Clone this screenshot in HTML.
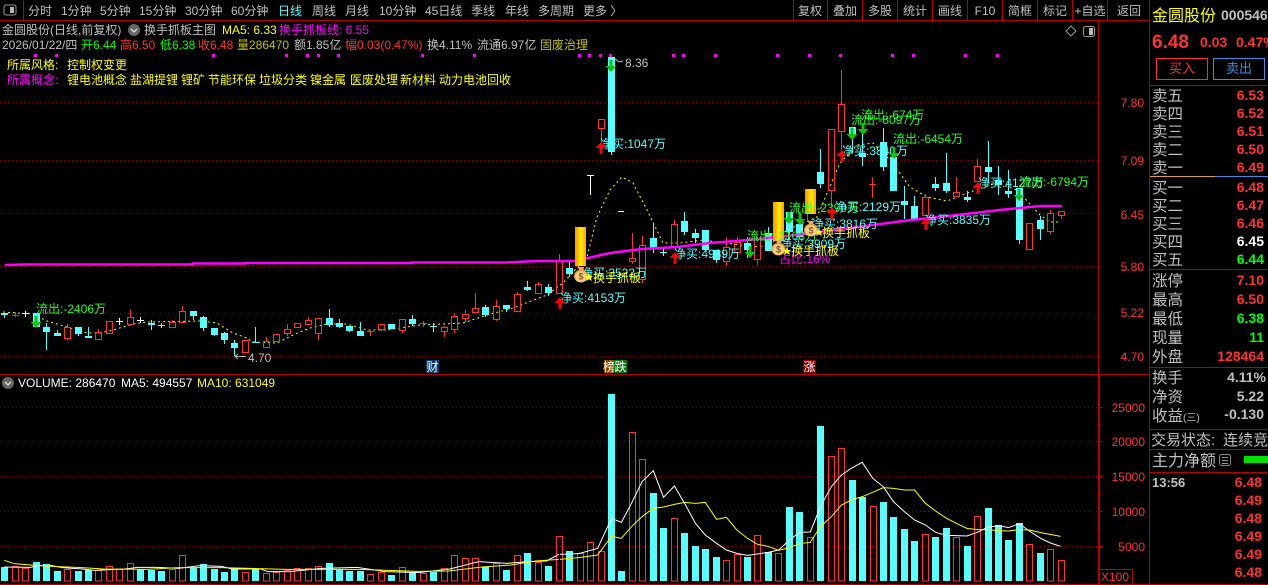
<!DOCTYPE html>
<html><head><meta charset="utf-8"><title>金圆股份</title>
<style>
html,body{margin:0;padding:0;background:#000;width:1268px;height:585px;overflow:hidden}
svg{display:block}
text{font-family:"Liberation Sans","WenQuanYi Zen Hei","Noto Sans CJK SC",sans-serif;font-size:12px;fill:#c0c0c0;white-space:pre}
.y{fill:#ff0}.m{fill:#f0f}.r{fill:#ff3232}.g{fill:#2f2}.c{fill:#5ff}.o{fill:#c0c000}.gn{fill:#0f0}
.l{font-size:15.5px}
.p{font-size:14px;font-weight:bold;text-anchor:end;fill:#ff3232}
.a{fill:#ff3232;text-anchor:end}
.tb{text-anchor:middle}
</style></head><body>
<svg width="1268" height="585" viewBox="0 0 1268 585" xmlns="http://www.w3.org/2000/svg">
<defs>
<linearGradient id="gold" x1="0" x2="1" y1="0" y2="0"><stop offset="0" stop-color="#ff9000"/><stop offset=".55" stop-color="#ffee00"/><stop offset="1" stop-color="#ffa000"/></linearGradient>
<radialGradient id="bag" cx=".5" cy=".55" r=".55"><stop offset="0" stop-color="#ffe8b0"/><stop offset=".7" stop-color="#f5c878"/><stop offset="1" stop-color="#c87810"/></radialGradient>
<path id="dn" d="M-1.5 0h3v6h4l-5.500 6-5.500-6h4z" fill="#12c012"/>
<path id="up" d="M0 0l5.500 6h-4v6h-3v-6h-4z" fill="#f00"/>
</defs>
<rect width="1268" height="585" fill="#000"/>

<!-- grid -->
<g stroke="#900000" stroke-width="1" stroke-dasharray="1 3">
<path d="M0 102.500H1098M0 160.500H1098M0 213.500H1098M0 266.500H1098M0 313.500H1098M0 356.500H1098M0 407.500H1098M0 441.500H1098M0 476.500H1098M0 511.500H1098M0 546.500H1098"/>
</g>

<!-- frame -->
<g stroke="#b80000" stroke-width="1" fill="none" shape-rendering="crispEdges">
<path d="M0 20.500H1149M0 374.500H1149M0 584.500H1268M1098.500 20V585M1149.500 0V585M23.500 0V20M793.500 0V20M827.500 0V20M862.500 0V20M897.500 0V20M932.500 0V20M967.500 0V20M1002.500 0V20M1037.500 0V20M1072.500 0V20M1107.500 0V20"/>
<path d="M1150 85.500H1268M1150 269.500H1268M1150 367.500H1268M1150 429.500H1268M1150 449.500H1268M1150 472.500H1268M1099.500 375V585"/>
<path d="M1099.500 569.500H1132.500V584M1099 407.500h4M1099 441.500h4M1099 476.500h4M1099 511.500h4M1099 546.500h4M1099 424.500h2M1099 459.500h2M1099 494.500h2M1099 529.500h2"/>
</g>

<!-- tabs -->
<rect x="4" y="5" width="12" height="10" rx="2" fill="none" stroke="#999"/><rect x="10" y="7" width="4" height="6" fill="#bbb"/>
<g>
<text x="28" y="15">分时</text><text x="61" y="15">1分钟</text><text x="100" y="15">5分钟</text><text x="139" y="15">15分钟</text><text x="185" y="15">30分钟</text><text x="231" y="15">60分钟</text><text x="278" y="15" class="c">日线</text><text x="312" y="15">周线</text><text x="345" y="15">月线</text><text x="379" y="15">10分钟</text><text x="425" y="15">45日线</text><text x="471" y="15">季线</text><text x="505" y="15">年线</text><text x="538" y="15">多周期</text><text x="583" y="15">更多 〉</text>
<text class="tb" x="810" y="15">复权</text><text class="tb" x="845" y="15">叠加</text><text class="tb" x="880" y="15">多股</text><text class="tb" x="915" y="15">统计</text><text class="tb" x="950" y="15">画线</text><text class="tb" x="985" y="15">F10</text><text class="tb" x="1020" y="15">简框</text><text class="tb" x="1055" y="15">标记</text><text class="tb" x="1090" y="15">+自选</text><text class="tb" x="1129" y="15">返回</text>
</g>

<!-- header rows -->
<text x="2" y="34">金圆股份(日线,前复权)</text>
<circle cx="134" cy="30" r="6" fill="#666"/><path d="M131 29l3 3 3-3" stroke="#ddd" fill="none" stroke-width="1.300"/>
<text x="144" y="34">换手抓板主图</text><text x="222" y="34" class="y">MA5: 6.33</text><text x="279" y="34" class="m">换手抓板线: 6.55</text>
<text x="2" y="49">2026/01/22/四</text><text x="81" y="49" class="gn">开6.44</text><text x="120" y="49" class="r">高6.50</text><text x="160" y="49" class="gn">低6.38</text><text x="198" y="49" class="r">收6.48</text><text x="237" y="49" class="o">量286470</text><text x="294" y="49">额1.85亿</text><text x="345" y="49" class="r">幅0.03(0.47%)</text><text x="427" y="49">换4.11%</text><text x="477" y="49">流通6.97亿</text><text x="540" y="49" class="o">固废治理</text>
<text x="7" y="69" class="y">所属风格:</text><text x="67" y="69" class="y">控制权变更</text>
<text x="7" y="84" class="m">所属概念:</text>
<text x="67" y="84" class="y">锂电池概念</text><text x="130" y="84" class="y">盐湖提锂</text><text x="181" y="84" class="y">锂矿</text><text x="208" y="84" class="y">节能环保</text><text x="259" y="84" class="y">垃圾分类</text><text x="310" y="84" class="y">镍金属</text><text x="350" y="84" class="y">医废处理</text><text x="400" y="84" class="y">新材料</text><text x="439" y="84" class="y">动力电池回收</text>

<!-- top-right chart icons -->
<path d="M1071 26l5 5-5 5-5-5z" fill="none" stroke="#999"/>
<rect x="1083.500" y="26.500" width="11" height="10" rx="2" fill="none" stroke="#999"/><rect x="1089" y="28" width="4" height="7" fill="#bbb"/>

<!-- magenta dots -->
<path fill="#f0f" d="M34 54h3v3h-3zM55 54h3v3h-3zM212 54h3v3h-3zM285 54h3v3h-3zM306 54h3v3h-3zM317 54h3v3h-3zM337 54h3v3h-3zM421 54h3v3h-3zM473 54h3v3h-3zM578 54h3v3h-3zM588 54h3v3h-3zM599 54h3v3h-3zM609 54h3v3h-3zM672 54h3v3h-3zM682 54h3v3h-3zM714 54h3v3h-3zM776 54h3v3h-3zM808 54h3v3h-3zM839 54h3v3h-3zM891 54h3v3h-3zM912 54h3v3h-3zM964 54h3v3h-3zM996 54h3v3h-3z"/>

<!-- MA dashed yellow -->
<path fill="none" stroke="#ff0" stroke-width="1" stroke-dasharray="2 3" d="M3 312L33 314L47 321L67 327L87 333L100 333L113 330L133 324L147 322L200 321L217 323L233 333L247 338L253 342L277 343L293 335L310 328L327 324L347 324L367 330L387 330L420 325L463 323L487 315L513 308L547 295L563 283L587 257L597 217L610 190L622 177L633 183L647 210L663 243L680 243L703 240L748 246L767 247L787 230L817 217L840 163L857 145L873 143L890 160L910 187L927 197L947 201L970 192L997 183L1017 190L1040 215L1050 222L1060 222"/>

<!-- white doji -->
<path stroke="#fff" stroke-width="1" fill="none" shape-rendering="crispEdges" d="M25.500 311V317M22 313.500h7M119.500 318V325M116 321.500h7M140.500 317V323M137 320.500h7M590.500 175V195M587 175.500h7M618 211.500h6"/>

<!-- cyan wicks -->
<path stroke="#5ff" stroke-width="1" fill="none" shape-rendering="crispEdges" d="M4.500 313V318M46.500 323V350M57.500 330V336M78.500 327V336M88.500 327V338M151.500 320V330M161.500 323V328M193.500 311V320M203.500 316V331M214.500 328V336M224.500 332V344M234.500 340V356M255.500 327V343M329.500 309V327M339.500 319V328M349.500 326V332M360.500 322V336M412.500 315V326M433.500 323V332M485.500 305V317M506.500 305V312M527.500 281V291M548.500 284V296M569.500 261V277M611.500 57V155M653.500 223V253M663.500 247V256M684.500 212V235M695.500 229V243M716.500 250V263M747.500 237V258M768.500 227V251M789.500 212V240M820.500 149V188M852.500 127V153M862.500 133V166M883.500 128V171M904.500 186V219M914.500 196V219M935.500 177V191M946.500 153V193M967.500 191V202M988.500 141V183M998.500 166V195M1008.500 170V198M1019.500 188V244M1040.500 216V240"/>
<!-- cyan bodies -->
<path fill="#5ff" shape-rendering="crispEdges" d="M1 313h7V315h-7zM33 313h7V327h-7zM43 327h7V332h-7zM54 333h7V336h-7zM75 327h7V334h-7zM85 336h7V338h-7zM148 323h7V325h-7zM158 325h7V326h-7zM190 311h7V316h-7zM200 317h7V328h-7zM211 328h7V335h-7zM221 333h7V340h-7zM231 343h7V348h-7zM252 342h7V343h-7zM326 318h7V325h-7zM336 323h7V327h-7zM346 326h7V331h-7zM357 331h7V336h-7zM388 324h7V329h-7zM409 319h7V324h-7zM430 326h7V327h-7zM482 307h7V315h-7zM503 305h7V309h-7zM524 287h7V290h-7zM545 287h7V293h-7zM566 268h7V274h-7zM608 57h7V152h-7zM650 238h7V248h-7zM660 252h7V253h-7zM681 221h7V232h-7zM692 233h7V238h-7zM702 230h7V250h-7zM713 250h7V260h-7zM744 243h7V250h-7zM765 233h7V251h-7zM786 212h7V232h-7zM796 224h7V237h-7zM817 172h7V184h-7zM849 127h7V135h-7zM859 153h7V157h-7zM880 142h7V167h-7zM890 157h7V191h-7zM901 201h7V205h-7zM911 206h7V219h-7zM932 184h7V188h-7zM943 183h7V191h-7zM964 197h7V200h-7zM985 167h7V172h-7zM995 180h7V185h-7zM1005 191h7V194h-7zM1016 188h7V240h-7zM1037 220h7V229h-7z"/>
<!-- red candles -->
<path stroke="#ff3232" stroke-width="1" fill="none" shape-rendering="crispEdges" d="M12 315.500h7M15.500 312V317M64.500 327.500h6V338.500h-6zM67.500 324V327M67.500 339V340M95.500 332.500h6V339.500h-6zM98.500 329V332M106.500 321.500h6V333.500h-6zM127.500 317.500h6V324.500h-6zM130.500 310V317M169.500 322.500h6V327.500h-6zM172.500 320V322M179.500 311.500h6V322.500h-6zM182.500 306V311M242.500 340.500h6V352.500h-6zM263.500 341.500h6V347.500h-6zM266.500 337V341M273.500 334.500h6V341.500h-6zM284.500 329.500h6V333.500h-6zM287.500 324V329M287.500 334V336M294.500 323.500h6V327.500h-6zM305.500 320.500h6V324.500h-6zM308.500 317V320M315.500 318.500h6V333.500h-6zM318.500 334V340M367 331.500h7M370.500 331V336M378.500 324.500h6V329.500h-6zM381.500 330V331M399.500 319.500h6V330.500h-6zM402.500 331V333M420 323.500h7M423.500 321V327M441.500 327.500h6V331.500h-6zM444.500 326V327M444.500 332V337M451.500 316.500h6V329.500h-6zM454.500 313V316M454.500 330V333M462.500 314.500h6V318.500h-6zM465.500 310V314M465.500 319V322M472.500 308.500h6V312.500h-6zM475.500 293V308M493.500 306.500h6V319.500h-6zM496.500 300V306M496.500 320V321M514.500 294.500h6V311.500h-6zM517.500 292V294M535.500 284.500h6V293.500h-6zM538.500 282V284M556.500 261.500h6V293.500h-6zM559.500 254V261M598.500 119.500h6V128.500h-6zM601.500 129V145M629.500 258.500h6V261.500h-6zM632.500 233V258M632.500 262V264M639.500 245.500h6V279.500h-6zM642.500 236V245M642.500 280V283M671.500 224.500h6V247.500h-6zM674.500 220V224M723.500 247.500h6V261.500h-6zM726.500 237V247M726.500 262V266M734.500 242.500h6V252.500h-6zM737.500 237V242M754.500 238.500h6V259.500h-6zM757.500 237V238M757.500 260V265M828.500 129.500h6V190.500h-6zM831.500 191V216M838.500 104.500h6V131.500h-6zM841.500 70V104M841.500 132V150M869 184.500h7M872.500 177V198M922.500 197.500h6V215.500h-6zM925.500 194V197M953.500 192.500h6V196.500h-6zM956.500 177V192M974.500 166.500h6V181.500h-6zM977.500 159V166M1026.500 223.500h6V249.500h-6zM1047.500 213.500h6V231.500h-6zM1050.500 210V213M1050.500 232V234M1058.500 211.500h6V215.500h-6zM1061.500 216V219M807.500 214V222"/>

<!-- magenta MA -->
<path fill="none" stroke="#f0f" stroke-width="2.500" d="M5 265L25 264.500H193V263.500H245V263H412V262.500H506L538 261H575L588 258L610 253L642 249L677 247L710 243L748 240L795 235L850 228L903 221L957 215L1000 210L1040 206L1062 206"/>

<!-- gold bars -->
<rect x="575" y="227" width="11" height="39" fill="url(#gold)"/>
<rect x="773" y="202" width="11" height="39" fill="url(#gold)"/>
<rect x="805" y="189" width="11" height="25" fill="url(#gold)"/>

<!-- annotations -->
<text x="36" y="313" class="g">流出:-2406万</text>
<text x="600" y="148" class="c">净买:1047万</text>
<text x="581" y="277" class="c">净买:3522万</text>
<text x="560" y="302" class="c">净买:4153万</text>
<text x="674" y="258" class="c">净买:4989万</text>
<text x="747" y="240" class="g">流出:-3108万</text>
<text x="780" y="248" class="c">净买:3909万</text>
<text x="812" y="228" class="c">净买:3816万</text>
<text x="789" y="212" class="g">流出:-2390万</text>
<text x="835" y="211" class="c">净买:2129万</text>
<text x="851" y="124" class="g">流出:-8097万</text>
<text x="861" y="119" class="g">流出:-674万</text>
<text x="893" y="143" class="g">流出:-6454万</text>
<text x="842" y="155" class="c">净买:3840万</text>
<text x="925" y="224" class="c">净买:3835万</text>
<text x="978" y="187" class="c">净买:4127万</text>
<text x="1019" y="186" class="g">流出:-6794万</text>
<text x="779" y="263" class="m">占比:16%</text>
<text x="625" y="67">8.36</text>
<path d="M615 59l4 3 4-1" stroke="#bbb" fill="none"/>
<text x="248" y="362">4.70</text>
<path d="M235 356.500h11M238 354l-3 2.500 3 2.500" stroke="#bbb" fill="none"/>

<!-- arrows -->
<use href="#dn" x="36" y="316"/><use href="#dn" x="611" y="60"/><use href="#dn" x="789" y="212"/><use href="#dn" x="800" y="213"/><use href="#dn" x="852" y="128"/><use href="#dn" x="863" y="123"/><use href="#dn" x="894" y="147"/><use href="#dn" x="1019" y="189"/><use href="#dn" x="750" y="246"/>
<use href="#up" x="560" y="297"/><use href="#up" x="601" y="142"/><use href="#up" x="675" y="252"/><use href="#up" x="832" y="207"/><use href="#up" x="842" y="150"/><use href="#up" x="926" y="218"/><use href="#up" x="978" y="182"/>

<!-- bags -->
<g>
<ellipse cx="581" cy="276" rx="7" ry="6.500" fill="url(#bag)"/><path d="M578 267h6l-1 3h-4z" fill="#e8b060"/><text x="578.500" y="279.500" style="font-size:9px;font-weight:bold;fill:#8a4a10">$</text>
<ellipse cx="778.500" cy="249" rx="7" ry="6.500" fill="url(#bag)"/><path d="M776 240h6l-1 3h-4z" fill="#e8b060"/><text x="776" y="252.500" style="font-size:9px;font-weight:bold;fill:#8a4a10">$</text>
<ellipse cx="811" cy="230" rx="7" ry="6.500" fill="url(#bag)"/><path d="M808 221h6l-1 3h-4z" fill="#e8b060"/><text x="808.500" y="233.500" style="font-size:9px;font-weight:bold;fill:#8a4a10">$</text>
</g>
<polygon points="589,273 590.200,276 593,276 591,278 592,281 589,279.300 586,281 587,278 585,276 587.800,276" fill="#ff0"/>
<polygon points="787,247 788.200,250 791,250 789,252 790,255 787,253.300 784,255 785,252 783,250 785.800,250" fill="#ff0"/>
<polygon points="819,228 820.200,231 823,231 821,233 822,236 819,234.300 816,236 817,233 815,231 817.800,231" fill="#ff0"/>
<text x="593" y="282" class="y">换手抓板</text>
<text x="791" y="255" class="y">换手抓板</text>
<text x="822" y="237" class="y">换手抓板</text>

<!-- event markers -->
<rect x="426" y="360" width="13" height="13" fill="#0a3a70"/><text x="426.500" y="371" style="fill:#fff">财</text>
<rect x="604" y="360" width="11" height="13" fill="#8a4a00"/><text x="603" y="371" style="fill:#fff">榜</text>
<rect x="614" y="360" width="13" height="13" fill="#0a7a0a"/><text x="614.500" y="371" style="fill:#fff">跌</text>
<rect x="803" y="360" width="13" height="13" fill="#8a0000"/><text x="803.500" y="371" style="fill:#fff">涨</text>

<!-- axis labels main -->
<text class="a" x="1144" y="107">7.80</text><text class="a" x="1144" y="165">7.09</text><text class="a" x="1144" y="219">6.45</text><text class="a" x="1144" y="271">5.80</text><text class="a" x="1144" y="317">5.22</text><text class="a" x="1144" y="361">4.70</text>
<text class="a" x="1145" y="412">25000</text><text class="a" x="1145" y="446">20000</text><text class="a" x="1145" y="481">15000</text><text class="a" x="1145" y="516">10000</text><text class="a" x="1145" y="551">5000</text>
<text x="1101" y="581" class="r">X100</text>

<!-- volume header -->
<circle cx="8" cy="383" r="6" fill="#666"/><path d="M5 382l3 3 3-3" stroke="#ddd" fill="none" stroke-width="1.300"/>
<text x="18" y="387" style="fill:#fff">VOLUME: 286470</text><text x="121" y="387" style="fill:#fff">MA5: 494557</text><text x="197" y="387" class="y">MA10: 631049</text>

<!-- volume bars cyan -->
<path fill="#5ff" shape-rendering="crispEdges" d="M1 567h7V581h-7zM33 562h7V581h-7zM43 564h7V581h-7zM54 571h7V581h-7zM75 571h7V581h-7zM85 570h7V581h-7zM137 569h7V581h-7zM148 570h7V581h-7zM158 571h7V581h-7zM190 568h7V581h-7zM200 564h7V581h-7zM211 569h7V581h-7zM221 572h7V581h-7zM231 569h7V581h-7zM252 569h7V581h-7zM326 563h7V581h-7zM336 570h7V581h-7zM346 571h7V581h-7zM357 571h7V581h-7zM388 575h7V581h-7zM409 572h7V581h-7zM430 572h7V581h-7zM482 567h7V581h-7zM503 570h7V581h-7zM524 553h7V581h-7zM545 566h7V581h-7zM566 551h7V581h-7zM608 394h7V581h-7zM618 571h7V581h-7zM650 493h7V581h-7zM660 528h7V581h-7zM681 533h7V581h-7zM692 546h7V581h-7zM702 549h7V581h-7zM713 557h7V581h-7zM744 557h7V581h-7zM765 552h7V581h-7zM786 507h7V581h-7zM796 512h7V581h-7zM817 426h7V581h-7zM849 480h7V581h-7zM859 497h7V581h-7zM880 502h7V581h-7zM890 517h7V581h-7zM901 529h7V581h-7zM911 541h7V581h-7zM932 537h7V581h-7zM943 528h7V581h-7zM964 546h7V581h-7zM985 508h7V581h-7zM995 525h7V581h-7zM1005 540h7V581h-7zM1016 523h7V581h-7zM1037 553h7V581h-7z"/>
<!-- volume bars red -->
<path fill="none" stroke="#ff3232" stroke-width="1" shape-rendering="crispEdges" d="M12.500 566.500h6V581h-6zM22.500 568.500h6V581h-6zM64.500 569.500h6V581h-6zM95.500 570.500h6V581h-6zM106.500 566.500h6V581h-6zM116.500 569.500h6V581h-6zM127.500 563.500h6V581h-6zM169.500 569.500h6V581h-6zM179.500 555.500h6V581h-6zM242.500 572.500h6V581h-6zM263.500 573.500h6V581h-6zM273.500 572.500h6V581h-6zM284.500 570.500h6V581h-6zM294.500 568.500h6V581h-6zM305.500 568.500h6V581h-6zM315.500 566.500h6V581h-6zM367.500 574.500h6V581h-6zM378.500 572.500h6V581h-6zM399.500 567.500h6V581h-6zM420.500 573.500h6V581h-6zM441.500 568.500h6V581h-6zM451.500 555.500h6V581h-6zM462.500 558.500h6V581h-6zM472.500 558.500h6V581h-6zM493.500 563.500h6V581h-6zM514.500 555.500h6V581h-6zM535.500 562.500h6V581h-6zM556.500 536.500h6V581h-6zM577.500 553.500h6V581h-6zM587.500 542.500h6V581h-6zM598.500 551.500h6V581h-6zM629.500 432.500h6V581h-6zM639.500 459.500h6V581h-6zM671.500 518.500h6V581h-6zM723.500 560.500h6V581h-6zM734.500 554.500h6V581h-6zM754.500 535.500h6V581h-6zM775.500 553.500h6V581h-6zM807.500 537.500h6V581h-6zM828.500 456.500h6V581h-6zM838.500 448.500h6V581h-6zM870.500 506.500h6V581h-6zM922.500 534.500h6V581h-6zM953.500 537.500h6V581h-6zM974.500 516.500h6V581h-6zM1026.500 544.500h6V581h-6zM1047.500 549.500h6V581h-6zM1058.500 560.500h6V581h-6z"/>
<!-- volume MAs -->
<g transform="translate(0,375) scale(.35714,.33333)" fill="none">
<path vector-effect="non-scaling-stroke" stroke="#fff" d="M12 576L85 577L110 571L145 572L175 578L230 582L265 586L350 582L385 577L440 577L500 580L560 572L620 574L650 582L730 582L750 590L810 590L900 580L1000 577L1080 590L1170 593L1260 582L1340 560L1420 565L1477 560L1530 558L1565 538"/>
<path vector-effect="non-scaling-stroke" stroke="#ff0" d="M12 556L40 566L85 570L145 574L230 578L290 582L410 583L500 578L620 578L800 583L1000 583L1170 589L1256 588L1350 576L1430 570L1500 558L1565 553"/>
</g>
<g transform="translate(560,375) scale(.37636,.33333)" fill="none">
<path vector-effect="non-scaling-stroke" stroke="#fff" d="M0 538L50 536L100 520L137 430L163 442L190 385L218 320L248 287L275 367L304 333L331 385L360 445L386 480L416 505L442 525L470 535L498 541L525 537L553 532L581 525L610 495L636 472L665 471L692 395L721 335L748 300L774 280L803 262L831 310L859 335L886 380L915 410L942 435L971 450L998 472L1027 481L1053 482L1081 483L1109 472L1136 457L1165 452L1192 458L1220 446L1247 468L1277 490L1303 504L1330 514"/>
<path vector-effect="non-scaling-stroke" stroke="#ff0" d="M0 553L50 548L100 540L137 484L163 490L190 455L218 425L248 400L275 396L304 388L331 382L360 385L386 382L416 433L442 427L470 465L498 490L525 508L553 514L581 526L610 518L636 506L665 502L692 455L721 425L748 390L774 375L803 365L831 352L859 338L886 340L915 345L942 345L971 385L998 408L1027 430L1053 445L1081 460L1109 464L1136 464L1165 467L1192 468L1220 464L1247 465L1277 473L1303 478L1330 484"/>
</g>

<!-- sidebar -->
<text x="1152" y="21" class="y" style="font-size:16px">金圆股份</text>
<text x="1221" y="20" style="font-size:14px;font-weight:bold">000546</text>
<text x="1152" y="48" class="r" style="font-size:19px;font-weight:bold">6.48</text>
<text x="1200" y="47" class="r" style="font-size:14px;font-weight:bold">0.03</text>
<text x="1236" y="47" class="r" style="font-size:14px;font-weight:bold">0.47%</text>
<rect x="1156.500" y="58.500" width="51" height="21" fill="none" stroke="#ff3232"/>
<rect x="1213.500" y="58.500" width="51" height="21" fill="none" stroke="#3c8ce0"/>
<text x="1182" y="73" class="tb r" style="font-size:13px">买入</text>
<text x="1239" y="73" class="tb" style="font-size:13px;fill:#3c8ce0">卖出</text>

<text x="1152" y="101" class="l">卖五</text><text x="1264" y="100" class="p">6.53</text>
<text x="1152" y="119" class="l">卖四</text><text x="1264" y="118" class="p">6.52</text>
<text x="1152" y="137" class="l">卖三</text><text x="1264" y="136" class="p">6.51</text>
<text x="1152" y="155" class="l">卖二</text><text x="1264" y="154" class="p">6.50</text>
<text x="1152" y="173" class="l">卖一</text><text x="1264" y="172" class="p">6.49</text>
<path d="M1150 176.500H1215" stroke="#e0a030"/><path d="M1215 176.500H1268" stroke="#3c8ce0"/>
<text x="1152" y="193" class="l">买一</text><text x="1264" y="192" class="p">6.48</text>
<text x="1152" y="211" class="l">买二</text><text x="1264" y="210" class="p">6.47</text>
<text x="1152" y="229" class="l">买三</text><text x="1264" y="228" class="p">6.46</text>
<text x="1152" y="247" class="l">买四</text><text x="1264" y="246" class="p" style="fill:#fff">6.45</text>
<text x="1152" y="265" class="l">买五</text><text x="1264" y="264" class="p" style="fill:#0f0">6.44</text>
<text x="1152" y="286" class="l">涨停</text><text x="1264" y="285" class="p">7.10</text>
<text x="1152" y="305" class="l">最高</text><text x="1264" y="304" class="p">6.50</text>
<text x="1152" y="324" class="l">最低</text><text x="1264" y="323" class="p" style="fill:#0f0">6.38</text>
<text x="1152" y="343" class="l">现量</text><text x="1264" y="342" class="p" style="fill:#0f0">11</text>
<text x="1152" y="362" class="l">外盘</text><text x="1264" y="361" class="p">128464</text>
<text x="1152" y="383" class="l">换手</text><text x="1266" y="382" class="p" style="fill:#c0c0c0">4.11%</text>
<text x="1152" y="402" class="l">净资</text><text x="1264" y="401" class="p" style="fill:#c0c0c0">5.22</text>
<text x="1152" y="421" class="l">收益<tspan style="font-size:10px">(三)</tspan></text><text x="1264" y="419" class="p" style="fill:#c0c0c0">-0.130</text>
<text x="1151" y="445" style="font-size:15px">交易状态:</text><text x="1223" y="445" style="font-size:15px">连续竞</text>
<text x="1152" y="466" style="font-size:16px">主力净额</text>
<rect x="1219.500" y="454.500" width="11" height="11" rx="2" fill="none" stroke="#888"/><path d="M1222 457.500h6M1222 460.500h6M1222 463.500h6" stroke="#999"/>
<rect x="1244" y="456" width="24" height="7" fill="#00e000"/>
<text x="1152" y="487" style="font-size:13px;font-weight:bold">13:56</text>
<text x="1262" y="487" class="p">6.48</text><text x="1262" y="505" class="p">6.49</text><text x="1262" y="523" class="p">6.48</text><text x="1262" y="541" class="p">6.49</text><text x="1262" y="559" class="p">6.49</text><text x="1262" y="577" class="p">6.48</text>
</svg>
</body></html>
